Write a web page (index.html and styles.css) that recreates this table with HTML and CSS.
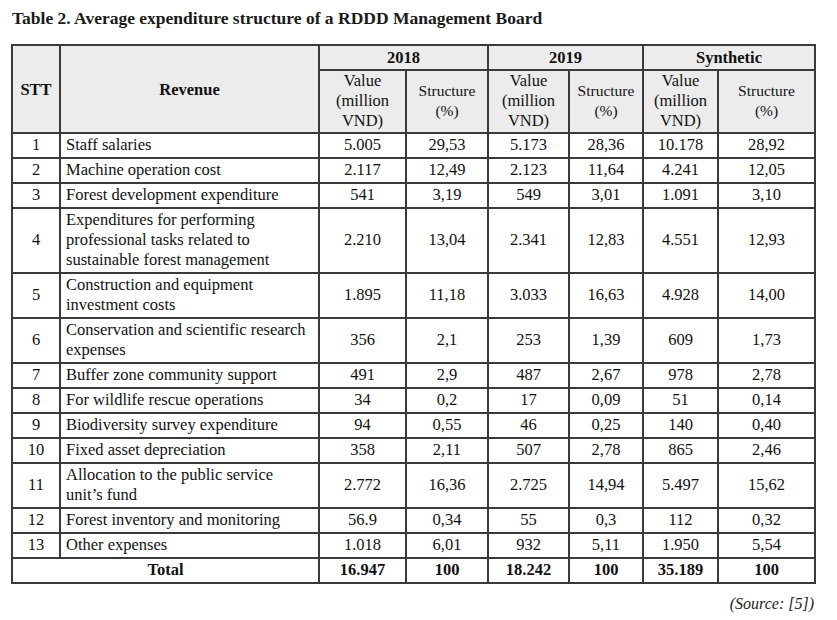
FILE: index.html
```html
<!DOCTYPE html>
<html>
<head>
<meta charset="utf-8">
<link rel="stylesheet" href="styles.css">
</head>
<body>
<div class="page">
  <h1 class="title">Table 2. Average expenditure structure of a RDDD Management Board</h1>
  <table class="data">
    <colgroup>
      <col class="c-stt"><col class="c-rev"><col class="c-v18"><col class="c-s18"><col class="c-v19"><col class="c-s19"><col class="c-vs"><col class="c-ss">
    </colgroup>
    <thead>
      <tr class="h1">
        <th rowspan="2" class="hb">STT</th>
        <th rowspan="2" class="hb">Revenue</th>
        <th colspan="2" class="hb">2018</th>
        <th colspan="2" class="hb">2019</th>
        <th colspan="2" class="hb">Synthetic</th>
      </tr>
      <tr class="h2">
        <th>Value<br>(million<br>VND)</th>
        <th class="sub">Structure<br>(%)</th>
        <th>Value<br>(million<br>VND)</th>
        <th class="sub">Structure<br>(%)</th>
        <th>Value<br>(million<br>VND)</th>
        <th class="sub">Structure<br>(%)</th>
      </tr>
    </thead>
    <tbody>
      <tr><td>1</td><td class="lbl">Staff salaries</td><td>5.005</td><td>29,53</td><td>5.173</td><td>28,36</td><td>10.178</td><td>28,92</td></tr>
      <tr><td>2</td><td class="lbl">Machine operation cost</td><td>2.117</td><td>12,49</td><td>2.123</td><td>11,64</td><td>4.241</td><td>12,05</td></tr>
      <tr><td>3</td><td class="lbl">Forest development expenditure</td><td>541</td><td>3,19</td><td>549</td><td>3,01</td><td>1.091</td><td>3,10</td></tr>
      <tr><td>4</td><td class="lbl">Expenditures for performing professional tasks related to sustainable forest management</td><td>2.210</td><td>13,04</td><td>2.341</td><td>12,83</td><td>4.551</td><td>12,93</td></tr>
      <tr><td>5</td><td class="lbl">Construction and equipment investment costs</td><td>1.895</td><td>11,18</td><td>3.033</td><td>16,63</td><td>4.928</td><td>14,00</td></tr>
      <tr><td>6</td><td class="lbl">Conservation and scientific research expenses</td><td>356</td><td>2,1</td><td>253</td><td>1,39</td><td>609</td><td>1,73</td></tr>
      <tr><td>7</td><td class="lbl">Buffer zone community support</td><td>491</td><td>2,9</td><td>487</td><td>2,67</td><td>978</td><td>2,78</td></tr>
      <tr><td>8</td><td class="lbl">For wildlife rescue operations</td><td>34</td><td>0,2</td><td>17</td><td>0,09</td><td>51</td><td>0,14</td></tr>
      <tr><td>9</td><td class="lbl">Biodiversity survey expenditure</td><td>94</td><td>0,55</td><td>46</td><td>0,25</td><td>140</td><td>0,40</td></tr>
      <tr><td>10</td><td class="lbl">Fixed asset depreciation</td><td>358</td><td>2,11</td><td>507</td><td>2,78</td><td>865</td><td>2,46</td></tr>
      <tr><td>11</td><td class="lbl">Allocation to the public service unit’s fund</td><td>2.772</td><td>16,36</td><td>2.725</td><td>14,94</td><td>5.497</td><td>15,62</td></tr>
      <tr><td>12</td><td class="lbl">Forest inventory and monitoring</td><td>56.9</td><td>0,34</td><td>55</td><td>0,3</td><td>112</td><td>0,32</td></tr>
      <tr><td>13</td><td class="lbl">Other expenses</td><td>1.018</td><td>6,01</td><td>932</td><td>5,11</td><td>1.950</td><td>5,54</td></tr>
      <tr class="total"><td colspan="2">Total</td><td>16.947</td><td>100</td><td>18.242</td><td>100</td><td>35.189</td><td>100</td></tr>
    </tbody>
  </table>
  <p class="source">(Source: [5])</p>
</div>
</body>
</html>
```
FILE: styles.css
```css
html, body {
  margin: 0;
  padding: 0;
  background: #fff;
}
body {
  font-family: "Liberation Serif", "Times New Roman", serif;
  color: #111;
}
.page {
  padding: 8px 0 0 11px;
  width: 803px;
}
.title {
  margin: 0 0 15px 1px;
  font-size: 17.5px;
  line-height: 21px;
  font-weight: bold;
  color: #1a1a1a;
}
.data {
  border-collapse: collapse;
  table-layout: fixed;
  width: 803px;
  font-size: 16.5px;
  line-height: 20px;
}
.c-stt { width: 48px; }
.c-rev { width: 259px; }
.c-v18 { width: 87px; }
.c-s18 { width: 82px; }
.c-v19 { width: 81px; }
.c-s19 { width: 74px; }
.c-vs { width: 75px; }
.c-ss { width: 97px; }
.data th, .data td {
  border: 2px solid #3a3a3a;
  padding: 1px 2px 2px;
  text-align: center;
  vertical-align: middle;
}
.data .h1 th {
  padding: 2px 2px 1px;
}
.data .h2 th {
  padding: 0 2px 1px;
}
.data th {
  background: #ececec;
  font-weight: normal;
}
.data th.hb {
  font-weight: bold;
}
.data th.sub {
  font-size: 15.5px;
}
.data td.lbl {
  text-align: left;
  padding-left: 5px;
  padding-right: 10px;
}
.data tr.total td {
  font-weight: bold;
}
.source {
  margin: 10px 0 0;
  text-align: right;
  font-style: italic;
  font-size: 16px;
  line-height: 20px;
  color: #222;
}
```
